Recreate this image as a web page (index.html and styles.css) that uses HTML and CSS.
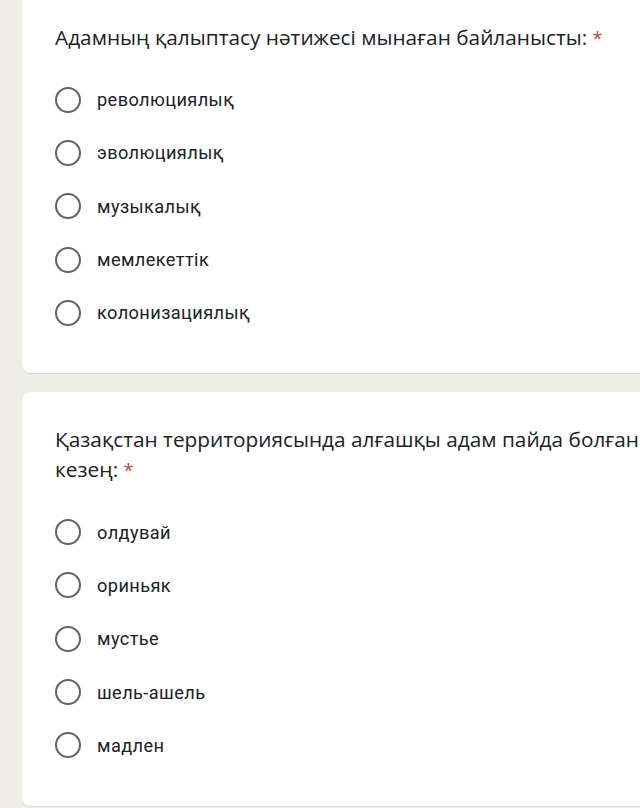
FILE: index.html
```html
<!DOCTYPE html>
<html lang="kk">
<head>
<meta charset="utf-8">
<link rel="stylesheet" href="styles.css">
</head>
<body>
<main class="form">
  <section class="card card-first">
    <h2 class="question">Адамның қалыптасу нәтижесі мынаған байланысты: <span class="req">*</span></h2>
    <ul class="options">
      <li class="option"><span class="radio"></span><span class="label">революциялық</span></li>
      <li class="option"><span class="radio"></span><span class="label">эволюциялық</span></li>
      <li class="option"><span class="radio"></span><span class="label">музыкалық</span></li>
      <li class="option"><span class="radio"></span><span class="label">мемлекеттік</span></li>
      <li class="option"><span class="radio"></span><span class="label">колонизациялық</span></li>
    </ul>
  </section>
  <section class="card">
    <h2 class="question">Қазақстан территориясында алғашқы адам пайда болған кезең: <span class="req">*</span></h2>
    <ul class="options">
      <li class="option"><span class="radio"></span><span class="label">олдувай</span></li>
      <li class="option"><span class="radio"></span><span class="label">ориньяк</span></li>
      <li class="option"><span class="radio"></span><span class="label">мустье</span></li>
      <li class="option"><span class="radio"></span><span class="label">шель-ашель</span></li>
      <li class="option"><span class="radio"></span><span class="label">мадлен</span></li>
    </ul>
  </section>
</main>
</body>
</html>
```
FILE: styles.css
```css
html, body {
  margin: 0;
  padding: 0;
  overflow: hidden;
  height: 100%;
}
body {
  background: #eeede7;
  font-family: Roboto, "Noto Sans", sans-serif;
  color: #202124;
}
.form {
  display: flex;
  flex-direction: column;
  gap: 19px;
  padding-left: 22px;
  margin-top: -10px;
}
.card {
  width: 680px;
  box-sizing: border-box;
  background: #ffffff;
  border-radius: 8px;
  padding: 32px 24px 34px 33px;
  box-shadow: 0 1px 1px rgba(0,0,0,0.10);
}
.question {
  margin: 0 0 21px;
  font-family: "Open Sans", "Noto Sans", sans-serif;
  font-weight: 400;
  font-size: 20.8px;
  line-height: 30px;
  color: #202124;
}
.req {
  color: #c5493b;
  font-size: 18px;
  line-height: 0;
}
.options {
  list-style: none;
  margin: 0;
  padding: 0;
}
.option {
  display: flex;
  align-items: center;
  height: 53.3px;
}
.radio {
  width: 26px;
  height: 26px;
  box-sizing: border-box;
  border: 2.3px solid #5f6368;
  border-radius: 50%;
  flex: none;
}
.label {
  margin-left: 16px;
  font-size: 18.2px;
  letter-spacing: 0.4px;
  color: #202124;
}
```
